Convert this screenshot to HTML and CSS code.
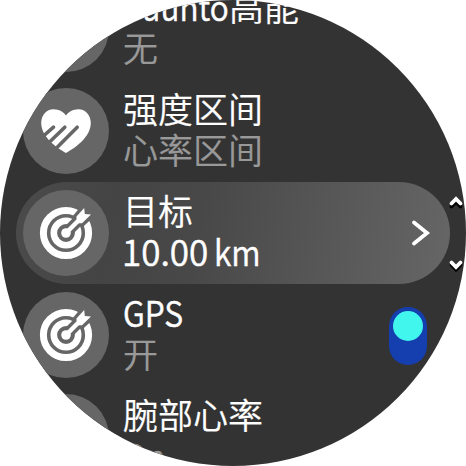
FILE: index.html
```html
<!DOCTYPE html>
<html lang="zh-CN">
<head>
<meta charset="utf-8">
<title>Suunto</title>
<link rel="stylesheet" href="styles.css">
</head>
<body>
<svg class="defs" width="0" height="0">
  <symbol id="target" viewBox="-43 -43 86 86">
    <circle r="22.6" fill="none" stroke="#fff" stroke-width="7"/>
    <circle r="12.2" fill="none" stroke="#fff" stroke-width="6.6"/>
    <path d="M0 0 11.5-11.5" stroke="#666" stroke-width="11" fill="none"/>
    <path d="M18-25 18.8-19 25-18.5 16-10H10.5V-16Z" fill="#666" stroke="#666" stroke-width="7"/>
    <circle r="4.8" fill="#fff"/>
    <path d="M0 0 12-12" stroke="#fff" stroke-width="4.4"/>
    <path d="M18.2-25 18.8-19 25-18.5 16-9.8H10.5V-16.5Z" fill="#fff"/>
  </symbol>
</svg>
<main class="screen">
  <ul class="list">
    <li class="row">
      <span class="icon"></span>
      <div class="text"><span class="title"><span class="brand">Suunto</span>高能</span><span class="value">无</span></div>
    </li>
    <li class="row">
      <span class="icon">
        <svg viewBox="-43 -43 86 86">
          <path d="M0 22C-9 17-24.8 6-24.8-8C-24.8-16-19.5-21.8-12.5-21.8C-7-21.8-2.3-19 0-15.5C2.3-19 7-21.8 12.5-21.8C19.5-21.8 24.8-16 24.8-8C24.8 6 9 17 0 22Z" fill="#fff"/>
          <path d="M-12.5-3.8-26 8M-1.2-3.8-19 13.5M11.2-3.8-10.5 17.9" fill="none" stroke="#666" stroke-width="3.6" stroke-linecap="round"/>
        </svg>
      </span>
      <div class="text"><span class="title">强度区间</span><span class="value">心率区间</span></div>
    </li>
    <li class="row selected">
      <span class="icon"><svg><use href="#target"/></svg></span>
      <div class="text"><span class="title">目标</span><span class="value"><span class="distance">10.00</span><span class="unit">km</span></span></div>
      <svg class="chevron" viewBox="0 0 20 28"><path d="M3 3.5 16 14 3 24.5" fill="none" stroke="#fff" stroke-width="3.8" stroke-linecap="round"/></svg>
    </li>
    <li class="row">
      <span class="icon"><svg><use href="#target"/></svg></span>
      <div class="text"><span class="title"><span class="gps">GPS</span></span><span class="value">开</span></div>
      <span class="toggle"><span class="knob"></span></span>
    </li>
    <li class="row">
      <span class="icon"></span>
      <div class="text"><span class="title">腕部心率</span><span class="value"><span class="status">On</span></span></div>
    </li>
  </ul>
  <svg class="scroll" viewBox="0 0 16 82">
    <g fill="none" stroke-width="3.8" stroke-linecap="round">
      <path d="M3.5 14.5 8 10 12.5 14.5M3.5 73 8 77.5 12.5 73" stroke="#000"/>
      <path d="M3.5 11.5 8 7 12.5 11.5M3.5 70.500 8 75 12.5 70.500" stroke="#fff"/>
    </g>
  </svg>
</main>
</body>
</html>
```

FILE: styles.css
```css
body {
  margin: 0;
  background: #fff;
  font-family: "Noto Sans CJK SC", sans-serif;
}

.defs {
  position: absolute;
}

.screen {
  position: relative;
  width: 466px;
  height: 466px;
  overflow: hidden;
  background: #333;
  clip-path: circle(233px);
}

.list {
  list-style: none;
  margin: -22px 0 0;
  padding: 0 16px;
}

.row {
  box-sizing: border-box;
  height: 102px;
  padding: 0 16px 0 7px;
  display: flex;
  align-items: center;
  border-radius: 51px;
}

.selected {
  background: linear-gradient(100deg, #4b4b4b 0%, #444 22%, #484848 42%, #666 100%);
}

.selected .value {
  color: #fff;
}

.icon {
  width: 86px;
  height: 86px;
  border-radius: 50%;
  background: #666;
  flex: none;
}

.icon svg {
  display: block;
  width: 86px;
  height: 86px;
}

.text {
  flex: 1;
  margin-left: 14px;
  padding-bottom: 6px;
  font-size: 35px;
  font-weight: 350;
  -webkit-text-stroke: 0.2px;
  line-height: 41px;
  white-space: nowrap;
}

.title,
.value {
  display: block;
  height: 41px;
}

.title {
  color: #fff;
}

.value {
  color: #999;
}

.brand,
.gps,
.distance,
.unit,
.status {
  display: inline-block;
  transform-origin: left;
  -webkit-text-stroke: 0.5px;
}

.brand {
  width: 107px;
  margin-right: -1px;
  transform: scaleX(0.9);
}

.gps {
  transform: scaleX(0.91);
}

.distance {
  width: 92px;
  margin-left: -1px;
}

.unit {
  transform: scaleX(0.91);
}

.status {
  transform: scaleX(0.9);
}

.chevron {
  width: 20px;
  height: 28px;
  margin-right: 3px;
}

.toggle {
  box-sizing: border-box;
  width: 38px;
  height: 58px;
  padding: 4px;
  margin: 1px 7px 0 0;
  border-radius: 19px;
  background: #153eae;
}

.knob {
  display: block;
  width: 30px;
  height: 30px;
  border-radius: 50%;
  background: #41f7ed;
}

.scroll {
  position: absolute;
  left: 447.5px;
  top: 192px;
  width: 16px;
  height: 82px;
}
```
